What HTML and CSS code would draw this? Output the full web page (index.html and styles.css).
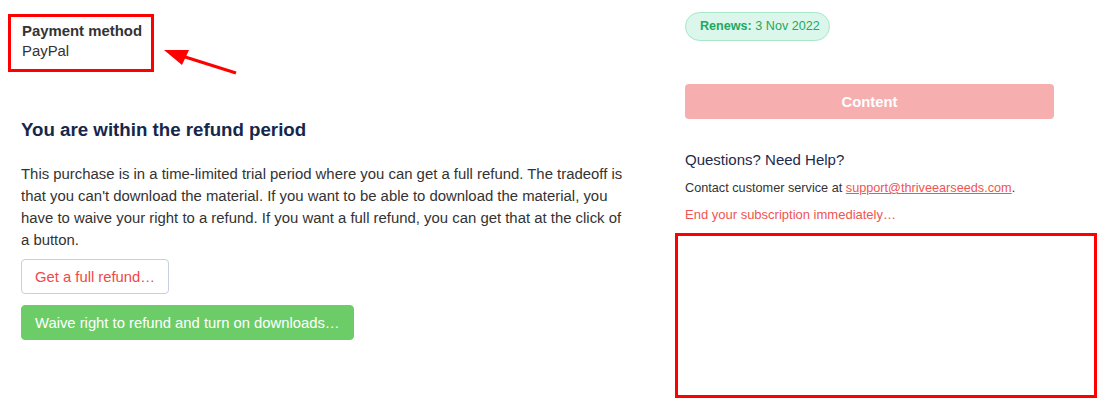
FILE: index.html
```html
<!DOCTYPE html>
<html lang="en">
<head>
    <meta charset="UTF-8">
    <meta name="viewport" content="width=device-width, initial-scale=1.0">
    <title>Subscription</title>
    <link rel="stylesheet" href="styles.css">
</head>
<body>
    <div class="page">
        <div class="main">
            <div class="payment">
                <div class="payment-label">Payment method</div>
                <div class="payment-value">PayPal</div>
            </div>

            <h2>You are within the refund period</h2>
            <p class="info">This purchase is in a time-limited trial period where you can get a full refund. The tradeoff is that you can't download the material. If you want to be able to download the material, you have to waive your right to a refund. If you want a full refund, you can get that at the click of a button.</p>

            <button class="btn btn-refund">Get a full refund…</button>
            <button class="btn btn-waive">Waive right to refund and turn on downloads…</button>
        </div>

        <div class="side">
            <div class="badge"><strong>Renews:</strong> 3 Nov 2022</div>
            <button class="btn btn-content">Content</button>
            <h3>Questions? Need Help?</h3>
            <p class="contact">Contact customer service at <a href="#">support@thriveearseeds.com</a>.</p>
            <a class="end-sub" href="#">End your subscription immediately…</a>
            <div class="highlight"></div>
        </div>
    </div>

    <!-- annotation arrow pointing at the payment box -->
    <svg class="arrow" width="260" height="90" viewBox="0 0 260 90">
        <line x1="236" y1="73" x2="182" y2="56" stroke="#ff0000" stroke-width="3"/>
        <polygon points="164,50 189,50 182,65" fill="#ff0000"/>
    </svg>
</body>
</html>
```

FILE: styles.css
```css
body, html {
    margin: 0;
    padding: 0;
    font-family: "Liberation Sans", Arial, sans-serif;
    background-color: #fff;
    color: #333;
}
.page {
    display: grid;
    grid-template-columns: 605px 369px;
    column-gap: 59px;
    padding-left: 21px;
}
.payment {
    display: inline-block;
    margin: 14px 0 0 -13px;
    padding: 4px 9px 8px 11px;
    border: 3px solid #ff0000;
    font-size: 14.9px;
    line-height: 20px;
}
.payment-label {
    font-weight: bold;
}
h2 {
    margin: 46px 0 0;
    font-size: 18.7px;
    line-height: 24px;
    color: #15274a;
}
.info {
    margin: 21px 0 0;
    font-size: 14.9px;
    line-height: 22px;
}
.btn {
    display: block;
    font-family: inherit;
    font-size: 14.8px;
    height: 35px;
    padding: 0 13px;
    border-radius: 4px;
    cursor: pointer;
}
.btn-refund {
    margin-top: 8px;
    background-color: #fff;
    border: 1px solid #c9cfe0;
    color: #f04848;
}
.btn-waive {
    margin-top: 11px;
    background-color: #6ccd68;
    border: 1px solid #6ccd68;
    color: #fff;
}
.badge {
    display: inline-block;
    margin-top: 12px;
    height: 27px;
    line-height: 27px;
    padding: 0 9px 0 14px;
    border: 1px solid #a9e7c8;
    border-radius: 15px;
    background-color: #dbf6ea;
    color: #1fa862;
    font-size: 12.6px;
}
.btn-content {
    width: 100%;
    margin-top: 43px;
    background-color: #f6aeae;
    border: none;
    color: #fff;
    font-weight: bold;
}
h3 {
    margin: 31px 0 0;
    font-size: 15px;
    font-weight: normal;
    line-height: 20px;
    color: #1c2a4c;
}
.contact {
    margin: 9px 0 0;
    font-size: 12.7px;
    line-height: 18px;
}
.contact a {
    color: #f05454;
}
.end-sub {
    display: block;
    margin-top: 9px;
    font-size: 13px;
    line-height: 18px;
    color: #f05454;
    text-decoration: none;
}
.highlight {
    margin: 9px 0 0 -10px;
    width: 416px;
    height: 159px;
    border: 3px solid #ff0000;
}
.arrow {
    position: absolute;
    left: 0;
    top: 0;
}
```
